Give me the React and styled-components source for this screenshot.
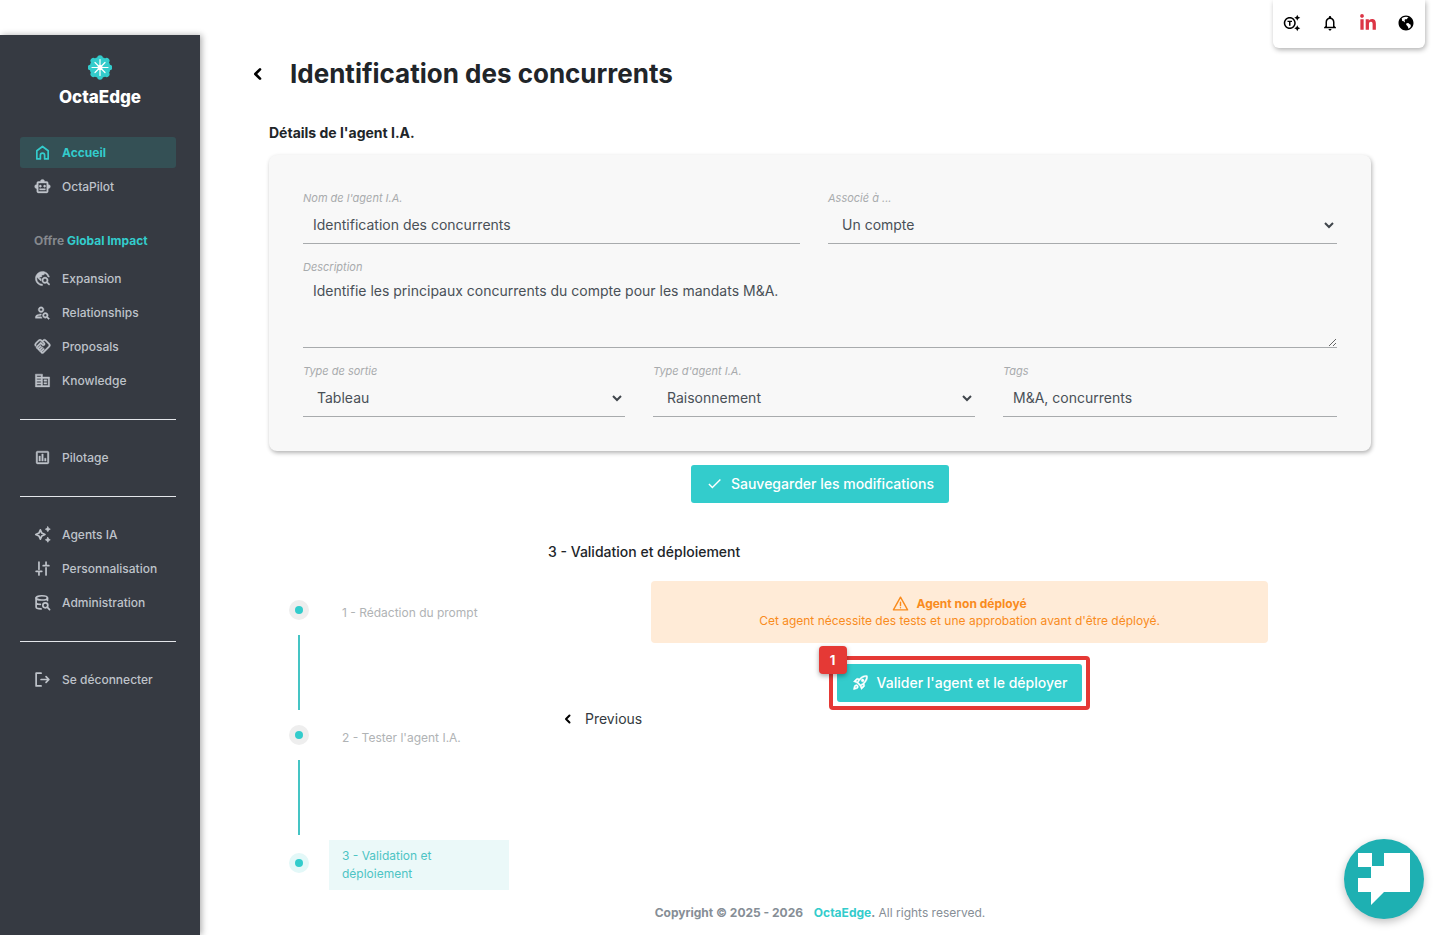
import React, { useState } from 'react'
import styled, { createGlobalStyle, css } from 'styled-components'
import {
  MdOutlineSmartToy,
  MdTravelExplore,
  MdOutlinePersonSearch,
  MdOutlineHandshake,
  MdOutlineCorporateFare,
  MdOutlineGeneratingTokens,
  MdNotificationsNone,
  MdOutlineAssessment,
  MdOutlineRocketLaunch,
  MdCheck
} from 'react-icons/md'
import { RiEarthFill } from 'react-icons/ri'
import { FaLinkedinIn } from 'react-icons/fa'

const teal = '#33cccc'

const GlobalStyle = createGlobalStyle`
* {
  box-sizing: border-box;
}
body {
  margin: 0;
  background: #fff;
  color: #212529;
  font-family: Inter, "Open Sans", sans-serif;
  font-size: 14px;
}
button, input, select, textarea {
  font-family: inherit;
}
/* material icons carry an empty bounding path, keep it invisible when stroked */
svg path[fill="none"] {
  stroke: none;
}
`

const Page = styled.div`
display: flex;
min-height: 100vh;
`

const Sidebar = styled.aside`
flex: 0 0 200px;
margin-top: 35px;
padding: 20px 24px 20px 20px;
background: #363a42;
box-shadow: 2px 0 6px rgba(0, 0, 0, .3);
`

const Brand = styled.a`
display: flex;
flex-direction: column;
align-items: center;
margin: 0 0 30px 4px;
color: #fff;
font-size: 17px;
font-weight: 800;
line-height: 20px;
text-decoration: none;
svg {
  margin-bottom: 7px;
}
`

const NavList = styled.ul`
display: flex;
flex-direction: column;
gap: 3px;
margin: 0;
padding: 0;
list-style: none;
`

const NavLink = styled.a`
display: flex;
align-items: center;
gap: 11px;
height: 31px;
padding-left: 14px;
border-radius: 3px;
color: #bfc3ca;
font-size: 12px;
font-weight: 500;
text-decoration: none;
${props => props.$active && css`
  background: #345055;
  color: ${teal};
  font-weight: 700;
`}
`

const NavTitle = styled.h2`
margin: 30px 0 13px 14px;
color: #85888d;
font-size: 12px;
font-weight: 700;
line-height: 18px;
span {
  color: ${teal};
}
`

const Divider = styled.hr`
height: 1px;
margin: 23px 0 22px;
border: 0;
background: #e4e6ea;
`

const TopBar = styled.div`
position: fixed;
top: 0;
right: 15px;
display: flex;
align-items: center;
justify-content: space-between;
width: 152px;
height: 48px;
padding: 0 10px 2px;
border-radius: 0 0 6px 6px;
background: #fff;
box-shadow: 1px 2px 5px rgba(0, 0, 0, .3);
`

const IconButton = styled.button`
display: flex;
padding: 0;
border: 0;
background: none;
color: ${props => props.$color || '#000'};
cursor: pointer;
`

const Main = styled.main`
flex: 1;
display: flex;
flex-direction: column;
min-width: 0;
padding: 56px 69px 13px;
`

const TitleRow = styled.div`
display: flex;
align-items: center;
gap: 24px;
margin-left: -19px;
`

const Title = styled.h1`
margin: 0;
font-size: 26px;
font-weight: 700;
line-height: 36px;
`

const SubTitle = styled.h2`
margin: 31px 0 12px;
font-size: 14px;
font-weight: 700;
line-height: 20px;
`

const Card = styled.form`
display: flex;
flex-direction: column;
gap: 14px;
padding: 34px;
border-radius: 8px;
background: #f8f8f8;
box-shadow: 1px 2px 4px rgba(0, 0, 0, .3);
`

const FieldRow = styled.div`
display: flex;
gap: 28px;
`

const Field = styled.div`
flex: 1 1 0;
display: flex;
flex-direction: column;
min-width: 0;
&:last-child {
  flex-basis: 12px;
}
`

const Label = styled.label`
padding-top: 1px;
color: #a8abad;
font-size: 11px;
font-style: italic;
line-height: 16px;
`

const control = css`
width: 100%;
margin: 0;
border: 0;
border-bottom: 1px solid #a8abad;
border-radius: 0;
outline: 0;
background: transparent;
color: #495057;
font-size: 14px;
`

const Input = styled.input`
${control}
height: 38px;
padding: 0 10px;
`

const TextArea = styled.textarea`
${control}
display: block;
height: 73px;
padding: 6px 10px;
line-height: 20px;
resize: vertical;
`

const SelectWrap = styled.div`
display: grid;
align-items: center;
svg {
  grid-area: 1 / 1;
  justify-self: end;
  margin-right: 3px;
  pointer-events: none;
}
`

const Select = styled.select`
${control}
grid-area: 1 / 1;
height: 38px;
padding: 0 14px;
appearance: none;
`

const ActionButton = styled.button`
display: flex;
align-items: center;
gap: 8px;
height: 38px;
padding: 0 15px 1px;
border: 0;
border-radius: 3px;
background: ${teal};
color: #fff;
font-size: 14px;
font-weight: 500;
cursor: pointer;
`

const SaveRow = styled.div`
display: flex;
justify-content: center;
margin-top: 14px;
`

const Wizard = styled.section`
display: flex;
margin-top: 38px;
`

const Steps = styled.ol`
flex: 0 0 279px;
margin: 0;
padding: 44px 39px 0 20px;
list-style: none;
`

const Step = styled.li`
display: flex;
align-items: center;
gap: 20px;
min-height: 50px;
`

const Dot = styled.span`
flex: none;
display: grid;
place-items: center;
width: 20px;
height: 20px;
border-radius: 50%;
background: ${props => props.$active ? '#e3f8f8' : '#eee'};
&::after {
  content: '';
  width: 8px;
  height: 8px;
  border-radius: 50%;
  background: ${teal};
}
`

const StepButton = styled.button`
flex: 1;
margin-top: 5px;
padding: 7px 13px;
border: 0;
background: ${props => props.$active ? '#ebf9f9' : 'none'};
color: ${props => props.$active ? '#4dc4c4' : '#b0b3b5'};
font-size: 12px;
line-height: 18px;
text-align: left;
cursor: pointer;
`

const StepLine = styled.li`
width: 2px;
height: 75px;
margin-left: 9px;
background: #45c4c4;
`

const Panel = styled.div`
flex: 1;
display: flex;
flex-direction: column;
align-items: center;
min-width: 0;
`

const PanelTitle = styled.h3`
align-self: flex-start;
margin: 0 0 19px;
font-size: 14px;
font-weight: 500;
line-height: 21px;
`

const Alert = styled.div`
width: 75%;
padding: 14px 20px;
border-radius: 4px;
background: #ffebd7;
color: #f98b1d;
font-size: 12px;
line-height: 17px;
text-align: center;
`

const AlertTitle = styled.strong`
display: flex;
align-items: center;
justify-content: center;
gap: 7px;
`

const Highlight = styled.div`
position: relative;
margin-top: 13px;
padding: 4px;
border: 4px solid #e53935;
border-radius: 4px;
`

const Badge = styled.span`
position: absolute;
top: -14px;
left: -14px;
width: 28px;
border-radius: 4px;
background: #e53935;
box-shadow: 0 2px 5px rgba(0, 0, 0, .35);
color: #fff;
font-size: 13px;
font-weight: 700;
line-height: 28px;
text-align: center;
`

const Previous = styled.button`
align-self: flex-start;
display: flex;
align-items: center;
gap: 11px;
margin-left: 14px;
padding: 0;
border: 0;
background: none;
color: #343a40;
font-size: 14px;
line-height: 18px;
cursor: pointer;
svg {
  color: #000;
}
`

const Footer = styled.footer`
margin-top: auto;
color: #868e96;
font-size: 12px;
line-height: 18px;
text-align: center;
a {
  margin-left: 8px;
  color: ${teal};
  text-decoration: none;
}
`

const ChatButton = styled.button`
position: fixed;
right: 16px;
bottom: 16px;
width: 80px;
height: 80px;
padding: 0;
border: 0;
border-radius: 50%;
background: #1eb0b2;
box-shadow: 0 3px 8px rgba(0, 0, 0, .25);
cursor: pointer;
svg {
  display: block;
}
`

const Stroke = ({ size = 17, width = 2.4, children }) => (
  <svg width={size} height={size} viewBox="0 0 24 24" fill="none" stroke="currentColor"
    strokeWidth={width} strokeLinecap="round" strokeLinejoin="round" aria-hidden="true">
    {children}
  </svg>
)

const HomeIcon = () => (
  <Stroke><path d="M4 9.500 12 3.500l8 6V21h-5v-5a3 3 0 0 0-6 0v5H4z" /></Stroke>
)

const SparkIcon = () => (
  <Stroke>
    <path d="M9 5.500 11 10l4.500 2-4.500 2L9 18.500 7 14l-4.500-2L7 10z" />
    <path fill="currentColor" strokeWidth="1" d="m19.500 1 1.200 2.300L23 4.500l-2.300 1.200L19.500 8l-1.200-2.300L16 4.500l2.300-1.200zM19.500 16l1.200 2.300 2.300 1.200-2.300 1.200-1.200 2.300-1.200-2.300-2.300-1.200 2.300-1.200z" />
  </Stroke>
)

const SlidersIcon = () => (
  <Stroke><path d="M7 3v10M3 16h8M7 16v5M17 21V11M13 8h8M17 8V3" /></Stroke>
)

const DatabaseIcon = () => (
  <Stroke>
    <ellipse cx="11" cy="5.500" rx="8" ry="3" />
    <path d="M3 5.500v13c0 1.500 3 2.500 7 2.500M19 5.500V9M3 12c0 1.500 2.500 2.500 6 2.700" />
    <circle cx="16" cy="16" r="3.500" />
    <path d="m19 19 3 3" />
  </Stroke>
)

const LogoutIcon = () => (
  <Stroke><path d="M10 3H3v18h7M10 12h11M17 8l4 4-4 4" /></Stroke>
)

const WarningIcon = () => (
  <Stroke width={2}><path d="M12 3 2 21h20zM12 10v5M12 18v.1" /></Stroke>
)

const ChevronLeft = ({ size, width }) => (
  <Stroke size={size} width={width}><path d="m15 5-7 7 7 7" /></Stroke>
)

const ChevronDown = () => (
  <svg width="10" height="8" viewBox="0 0 10 8" fill="none" stroke="#40464c" strokeWidth="2" aria-hidden="true">
    <path d="m1 2 4 4 4-4" />
  </svg>
)

const Logo = () => (
  <svg width="24" height="25" viewBox="-12 -12.500 24 25" aria-hidden="true">
    <g fill={teal}>
      <circle r="10.500" />
      {[0, 45, 90, 135, 180, 225, 270, 315].map(a => (
        <circle key={a} cy="-9.500" r="2.800" transform={`rotate(${a})`} />
      ))}
    </g>
    <path stroke="#fff" strokeWidth="1.200" strokeLinecap="round" d="M0-8V8M-8 0H8M-5-5 5 5M5-5-5 5" />
    <circle r="2.500" fill="#fff" />
  </svg>
)

const mainLinks = [
  { text: 'Accueil', Icon: HomeIcon, active: true },
  { text: 'OctaPilot', Icon: MdOutlineSmartToy }
]

const offerLinks = [
  { text: 'Expansion', Icon: MdTravelExplore },
  { text: 'Relationships', Icon: MdOutlinePersonSearch },
  { text: 'Proposals', Icon: MdOutlineHandshake },
  { text: 'Knowledge', Icon: MdOutlineCorporateFare }
]

const adminLinks = [
  { text: 'Agents IA', Icon: SparkIcon },
  { text: 'Personnalisation', Icon: SlidersIcon },
  { text: 'Administration', Icon: DatabaseIcon }
]

const steps = ['1 - Rédaction du prompt', "2 - Tester l'agent I.A.", '3 - Validation et déploiement']

const Nav = ({ links }) => (
  <NavList>
    {links.map(({ text, Icon, active }) => (
      <li key={text}>
        <NavLink href="#" $active={active}><Icon size={17} strokeWidth={0.6} />{text}</NavLink>
      </li>
    ))}
  </NavList>
)

const SelectField = ({ id, label, options }) => (
  <Field>
    <Label htmlFor={id}>{label}</Label>
    <SelectWrap>
      <Select id={id}>
        {options.map(option => <option key={option}>{option}</option>)}
      </Select>
      <ChevronDown />
    </SelectWrap>
  </Field>
)

const InputField = ({ id, label, value }) => (
  <Field>
    <Label htmlFor={id}>{label}</Label>
    <Input id={id} defaultValue={value} />
  </Field>
)

export default function App() {
  const [current, setCurrent] = useState(2)

  return (
    <Page>
      <GlobalStyle />
      <Sidebar>
        <Brand href="#"><Logo />OctaEdge</Brand>
        <Nav links={mainLinks} />
        <NavTitle>Offre <span>Global Impact</span></NavTitle>
        <Nav links={offerLinks} />
        <Divider />
        <Nav links={[{ text: 'Pilotage', Icon: MdOutlineAssessment }]} />
        <Divider />
        <Nav links={adminLinks} />
        <Divider />
        <Nav links={[{ text: 'Se déconnecter', Icon: LogoutIcon }]} />
      </Sidebar>

      <TopBar>
        <IconButton aria-label="Jetons"><MdOutlineGeneratingTokens size={18} /></IconButton>
        <IconButton aria-label="Notifications"><MdNotificationsNone size={18} /></IconButton>
        <IconButton aria-label="LinkedIn" $color="#dc3545"><FaLinkedinIn size={18} /></IconButton>
        <IconButton aria-label="Langue"><RiEarthFill size={18} /></IconButton>
      </TopBar>

      <Main>
        <TitleRow>
          <IconButton aria-label="Retour"><ChevronLeft size={16} width={4} /></IconButton>
          <Title>Identification des concurrents</Title>
        </TitleRow>
        <SubTitle>Détails de l'agent I.A.</SubTitle>

        <Card id="agent" onSubmit={e => e.preventDefault()}>
          <FieldRow>
            <InputField id="name" label="Nom de l'agent I.A." value="Identification des concurrents" />
            <SelectField id="target" label="Associé à ..." options={['Un compte']} />
          </FieldRow>
          <Field>
            <Label htmlFor="description">Description</Label>
            <TextArea id="description" defaultValue="Identifie les principaux concurrents du compte pour les mandats M&A." />
          </Field>
          <FieldRow>
            <SelectField id="output" label="Type de sortie" options={['Tableau']} />
            <SelectField id="type" label="Type d'agent I.A." options={['Raisonnement']} />
            <InputField id="tags" label="Tags" value="M&A, concurrents" />
          </FieldRow>
        </Card>
        <SaveRow>
          <ActionButton form="agent"><MdCheck size={17} />Sauvegarder les modifications</ActionButton>
        </SaveRow>

        <Wizard>
          <Steps>
            {steps.map((step, i) => (
              <React.Fragment key={step}>
                {i > 0 && <StepLine aria-hidden="true" />}
                <Step>
                  <Dot $active={i === current} />
                  <StepButton $active={i === current} onClick={() => setCurrent(i)}>{step}</StepButton>
                </Step>
              </React.Fragment>
            ))}
          </Steps>
          <Panel>
            <PanelTitle>{steps[current]}</PanelTitle>
            <Alert role="alert">
              <AlertTitle><WarningIcon />Agent non déployé</AlertTitle>
              Cet agent nécessite des tests et une approbation avant d'être déployé.
            </Alert>
            <Highlight>
              <Badge>1</Badge>
              <ActionButton>
                <MdOutlineRocketLaunch size={17} strokeWidth={0.6} />Valider l'agent et le déployer
              </ActionButton>
            </Highlight>
            <Previous onClick={() => setCurrent(Math.max(0, current - 1))}>
              <ChevronLeft size={12} width={4} />Previous
            </Previous>
          </Panel>
        </Wizard>

        <Footer>
          <strong>Copyright © 2025 - 2026 <a href="#">OctaEdge</a>.</strong> All rights reserved.
        </Footer>
      </Main>

      <ChatButton aria-label="Chat">
        <svg width="80" height="80" viewBox="0 0 80 80">
          <path fill="#fff" d="M14 14h14v13h12V14h26v39H40L27 66V53H14V39h13V28H14z" />
        </svg>
      </ChatButton>
    </Page>
  )
}
